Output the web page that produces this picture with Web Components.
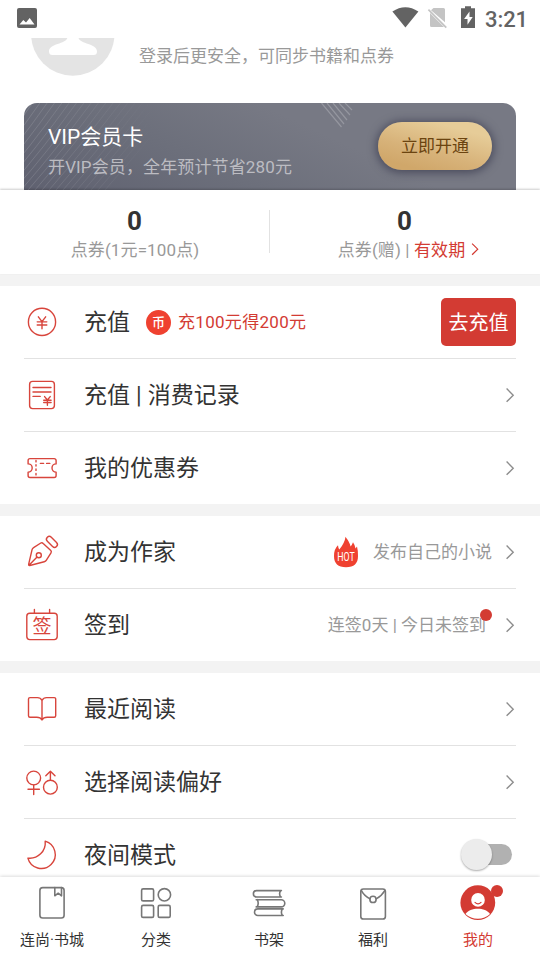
<!DOCTYPE html>
<html lang="zh-CN">
<head>
<meta charset="utf-8">
<title>我的</title>
<style>
html,body{margin:0;height:100%;overflow:hidden;background:#fff}
body{font-family:Roboto,"Noto Sans CJK SC",sans-serif;color:#333}
</style>
</head>
<body>
<my-page></my-page>
<script>
const define = (name, html, setup) => customElements.define(name, class extends HTMLElement {
  constructor() {
    super();
    this.attachShadow({mode: 'open'});
  }
  connectedCallback() {
    this.shadowRoot.innerHTML = html;
    if (setup) setup(this, this.shadowRoot);
  }
});

const yen = (x, y, w, h) => `<path d="M${x + w * .12} ${y}l${w * .38} ${h * .4}l${w * .38} ${-h * .4}M${x} ${y + h * .42}h${w}M${x} ${y + h * .68}h${w}M${x + w / 2} ${y + h * .4}v${h * .6}"/>`;

/* Menu glyphs on a 36x36 grid, tab glyphs on a 40x36 grid. */
const glyphs = {
  yuan: `<circle cx="18" cy="17.9" r="13.6"/>` + yen(13.2, 12.8, 9.6, 12),
  record: `<rect x="5.6" y="4.4" width="24.8" height="27.2" rx="3"/><path d="M9 10.5h18M9 15h18M9 19.4h7.2"/>` + yen(19.7, 19.6, 7.4, 8.6),
  ticket: `<path d="M6 8.6h24.2a1.9 1.9 0 0 1 1.9 1.9v3.4a4.1 4.1 0 0 0 0 8.2v3.5a1.9 1.9 0 0 1-1.9 1.9H6a1.9 1.9 0 0 1-1.9-1.9v-3.5a4.1 4.1 0 0 0 0-8.2v-3.4A1.9 1.9 0 0 1 6 8.6z"/><path d="M12 10.5v1.400M12 14.700v1.400M12 19v1.400M12 23.500v1.400M16.400 13.400h3.200M22.600 13.400h3.200"/>`,
  pen: `<path d="M16.8 9Q18 8.2 19.2 9.4L26.8 16.6Q27.8 17.6 27 18.8L22.4 26.2Q21.7 27.4 20.2 27.8L5.8 31.5Q4.4 31.7 4.7 30.2L8 15.8Q8.3 14.4 9.6 13.6zM5 31.2l7.8-8"/><circle cx="14.8" cy="21.2" r="2.5"/><rect x="22" y="5.4" width="13" height="5.6" rx="2.8" transform="rotate(45 28.5 8.2) translate(-.6 .2)"/>`,
  sign: `<rect x="2.8" y="6.3" width="30.4" height="26.3" rx="3"/><path d="M10.4 2.4v4M25.6 2.4v4"/><text x="18" y="26.300" font-size="19" text-anchor="middle">签</text>`,
  book: `<path d="M18 9.3Q16.5 6.6 13.4 6.6H6Q4.5 6.6 4.5 8.1V24.8Q4.5 26.3 6 26.3H12.8Q16.5 26.3 18 28.9Q19.5 26.3 23.2 26.3H30.2Q31.7 26.3 31.7 24.8V8.1Q31.7 6.6 30.2 6.6H22.6Q19.5 6.6 18 9.3V29"/>`,
  gender: `<circle cx="9.7" cy="14" r="6.9"/><path d="M9.7 21v9.6M4 25.2h11.4"/><circle cx="26.4" cy="23.2" r="6.9"/><path d="M26.4 16.2V7.2M21.8 11.8l4.6-4.6 4.6 4.6"/>`,
  moon: `<path d="M21.2 4.2A13.9 13.9 0 1 1 3.9 21.1A15.5 15.5 0 0 0 21.2 4.2z"/>`,
  store: `<rect x="7.9" y="2.6" width="24.2" height="30.4" rx="2.8"/><path d="M22.8 2.6v8.2l3.4-2.6 3.3 2.6V2.6"/>`,
  grid: `<rect x="5.6" y="3.9" width="12" height="12" rx="1.5"/><circle cx="28.4" cy="9.8" r="6.2"/><rect x="5.6" y="20.4" width="12" height="12" rx="1.5"/><rect x="22.2" y="20.4" width="12" height="12" rx="1.5"/>`,
  shelf: `<path d="M32.4 5.600H7.600a3.200 3.200 0 0 0 0 6.400H32.400M31.600 5.600q-2 3.200 0 6.400M7.200 14.700H32.200a3.600 3.600 0 0 1 0 7.200H7.200M8.200 14.700q2 3.600 0 7.200M34.200 23.900H8.800a3.300 3.300 0 0 0 0 6.600H34.200M33.400 23.900q-2 3.300 0 6.600"/>`,
  welfare: `<rect x="7.8" y="4" width="24.6" height="30" rx="2.6"/><path d="M8.4 5.6Q11 10.5 17 13.9M31.8 5.6Q29 10.5 23.2 13.9"/><circle cx="20" cy="14.4" r="3.1"/>`,
  me: `<circle cx="19.8" cy="17.7" r="17.4" fill="currentColor" stroke="none"/><circle cx="20" cy="14.9" r="6.8" fill="#fff" stroke="none"/><path d="M7.5 29C12 22 27.5 22 32 29Q27 33.8 19.8 33.8T7.5 29z" fill="#fff" stroke="none"/><path d="M17 17.4q3 2.8 6 0" stroke-width="1.2"/>`
};

define('ui-glyph', `<style>:host{display:block;flex:none}svg{display:block;fill:none;stroke:currentColor;stroke-width:1.4;stroke-linecap:round;stroke-linejoin:round}:host([wide]) svg{stroke-width:1.6}text{fill:currentColor;stroke:none;font-family:"Noto Sans CJK SC",sans-serif}</style><slot></slot>`, (el, root) => {
  const w = el.hasAttribute('wide') ? 40 : 36;
  root.innerHTML += `<svg width="${w}" height="36" viewBox="0 0 ${w} 36">${glyphs[el.getAttribute('name')]}</svg>`;
});

define('ui-chevron', `<style>:host{display:block;flex:none}svg{display:block;fill:none;stroke:currentColor;stroke-width:1.4}</style><svg width="10" height="16" viewBox="0 0 10 16"><path d="M1.600 1.600 8.200 8.200 1.600 14.800"/></svg>`);

define('status-bar', `<style>
:host{display:flex;align-items:center;height:38px;box-sizing:border-box;padding:0 12px 2px 17px;color:#636363;background:#fff;position:relative;z-index:2}
svg{display:block;fill:currentColor}.sp{flex:1}time{font-size:22px;font-weight:500;line-height:26px;margin:3px 0 0 9px;letter-spacing:-.1px}
</style>
<svg width="20" height="20" viewBox="0 0 20 20"><path fill-rule="evenodd" d="M2 0H18Q20 0 20 2V18Q20 20 18 20H2Q0 20 0 18V2Q0 0 2 0zM2.5 16.6H17.5L12.7 10 9 14.6 6.3 12z"/></svg>
<span class="sp"></span>
<svg width="84" height="24" viewBox="392 6 84 24"><path d="M392.4 11.6Q405.3 2.8 418.4 11.6L405.4 27.4z"/>
<path fill="#c4c4c4" d="M433.5 8H443.5Q445 8 445 9.5V22.3L431 10.2zM430 13 444 27H431.5Q430 27 430 25.5z"/><path d="M428.4 9.6 446.3 27.6" stroke="#c4c4c4" stroke-width="1.7"/>
<path fill-rule="evenodd" d="M465 6.2h6v2h4V28h-14V8.2h4zM469.5 11.5l-5.4 7.6h3.4v5.7l5.2-7.9h-3.2z"/></svg>
<time>3:21</time>`);

define('profile-head', `<style>
:host{display:flex;height:65px;padding-left:31px}svg{display:block}p{margin:5px 0 0 24px;font-size:17px;line-height:26px;color:#999}
</style>
<svg width="84" height="40" viewBox="31 38 84 40"><circle cx="72.8" cy="34" r="41.7" fill="#e4e4e4"/><path fill="#fff" d="M67.3 38H78.5C80 44 97 43.500 97 51.500Q97 55 93.500 55H52.500Q49 55 49 51.500C49 43.500 66 44 67.300 38z"/></svg>
<p>登录后更安全，可同步书籍和点券</p>`);

define('vip-card', `<style>
:host{display:flex;justify-content:space-between;height:87px;margin:0 24px;padding:0 24px;box-sizing:border-box;border-radius:13px 13px 0 0;position:relative;overflow:hidden;background:linear-gradient(25deg,#5f6170 0%,#6c6f7b 35%,#777984 62%,#777984 100%)}
svg{position:absolute;left:0;top:0;fill:none;stroke:#fff}
.t{position:relative}h2{margin:19px 0 0;font-size:21px;line-height:30px;font-weight:400;color:#fff}p{margin:1px 0 0;font-size:17px;line-height:28px;letter-spacing:.13px;color:#bcbcc2}
button{position:relative;margin:19px 0 0;width:114px;height:48px;border:0;border-radius:24px;padding:0;font:17px/48px Roboto,"Noto Sans CJK SC",sans-serif;color:#6b4410;background:linear-gradient(15deg,#d0a76a 15%,#d7b279 40%,#e6cc98 80%);box-shadow:0 1px 9px 2px #4b4c5d}
</style>
<svg width="492" height="87"><defs><linearGradient id="f" gradientUnits="userSpaceOnUse" x1="0" y1="0" x2="130" y2="0"><stop stop-color="#fff" stop-opacity=".13"/><stop offset="1" stop-color="#fff" stop-opacity="0"/></linearGradient></defs><g class="a" stroke="url(#f)"></g><path stroke-opacity=".22" stroke-width="1.2" d="M297.500 0 317.500 24M303 0 320 21M309 0 323 17M315 0 326 12M321 0 328 7"/></svg>
<div class="t"><h2>VIP会员卡</h2><p>开VIP会员，全年预计节省280元</p></div><button>立即开通</button>`, (el, root) => {
  let d = '';
  for (let i = 0; i < 22; i++) {
    const k = i * 7;
    d += `M${-66 + k} 87Q${-30 + k} 46 ${4 + k * 1.05} -4`;
  }
  root.querySelector('.a').innerHTML = `<path d="${d}"/>`;
});

define('points-panel', `<style>
:host{display:flex;height:84px;background:#fff;position:relative;box-shadow:0 -1px 2px #0003}
div{flex:1;text-align:center}div b{display:block;margin:15px 0 0 -1px;font-size:26px;line-height:32px;font-weight:700}
p{margin:0;display:flex;justify-content:center;align-items:center;font-size:17px;line-height:26px;letter-spacing:.12px;color:#999;white-space:pre}
i{width:1px;height:43px;margin:20px 0 0 -1px;background:#e2e2e2}em{font-style:normal}.g{padding-left:8px}.r{color:#d33b33}ui-chevron{transform:scale(.85);margin:-2px 0 0 5px}
</style>
<div><b>0</b><p>点券(1元=100点)</p></div><i></i><div><b>0</b><p class="g">点券(赠) | <em class="r">有效期</em><ui-chevron class="r"></ui-chevron></p></div>`);

define('menu-group', `<style>:host{display:block;background:#fff;border-top:12px solid #f3f3f3}</style><slot></slot>`);

define('menu-row', `<style>
:host{display:flex;align-items:center;height:72px;margin:0 24px}
:host(:not(:first-child)){border-top:1px solid #e2e2e2}
ui-glyph{color:#d8453c}h3{margin:1px 16px 0 24px;font-size:23px;line-height:34px;font-weight:400;white-space:pre;word-spacing:.4px;color:#333}
.end{margin:-1px 0 0 auto;display:flex;align-items:center;font-size:17px;line-height:26px;color:#999}
ui-chevron{margin:1px 1px 0 13px;color:#8d8d8d}:host([plain]) ui-chevron{display:none}
</style>
<ui-glyph></ui-glyph><h3></h3><slot name="note"></slot><div class="end"><slot></slot><ui-chevron></ui-chevron></div>`, (el, root) => {
  const g = document.createElement('ui-glyph');
  g.setAttribute('name', el.getAttribute('icon'));
  root.querySelector('ui-glyph').replaceWith(g);
  root.querySelector('h3').textContent = el.getAttribute('label');
});

define('coin-note', `<style>:host{display:flex;align-items:center;font-size:17px;line-height:26px;letter-spacing:.3px;color:#d33b33}i{width:25px;height:25px;margin-right:7px;border-radius:50%;background:#ef4130;color:#fff;font:500 13px/24px "Noto Sans CJK SC",sans-serif;text-align:center;letter-spacing:0}</style><i>币</i><slot></slot>`);

define('solid-button', `<style>:host{display:block;width:75px;height:48px;margin-top:1px;border-radius:5px;background:#d33b33;color:#fff;font-size:20px;line-height:50px;text-align:center}</style><slot></slot>`);

define('hot-badge', `<style>:host{display:block;margin-right:15px}svg{display:block;overflow:visible;fill:#ef4130}text{fill:#fff;font:12px Roboto,sans-serif}</style>
<svg width="24" height="32" viewBox="0 0 24 32"><path d="M11.500.8C13 3 16 7 16.500 10.500Q18 9 19 6.200Q21 9 21.500 12.500L23 10.500Q24.200 15 24 20C24 27.500 20 31.200 12 31.200S0 27.500 0 20Q0 13 4 9.300Q4.200 12 5.300 13.500C9 9 11 5 11.500.8z"/><text x="12" y="25.300" text-anchor="middle" textLength="17.500" lengthAdjust="spacingAndGlyphs">HOT</text></svg>`);

define('dot-note', `<style>:host{display:block;position:relative;padding-right:6px;line-height:26px}i{position:absolute;right:0;top:-3px;width:12px;height:12px;border-radius:50%;background:#d33b33}</style><slot></slot><i></i>`);

define('toggle-switch', `<style>:host{display:block;width:47px;height:21px;margin-right:4px;border-radius:11px;background:#b1b1b1;position:relative}i{position:absolute;left:-4px;top:-5px;width:31px;height:31px;border-radius:50%;background:#ececec;box-shadow:0 1px 2px #0005}</style><i></i>`);

define('tab-item', `<style>
:host{display:flex;flex-direction:column;align-items:center;color:#777}
:host([active]){color:#d33b33}span{margin-top:7px;font-size:15px;line-height:24px;color:#333}:host([active]) span{color:inherit}
.w{position:relative}.w i{display:none}:host([active]) .w i{display:block;position:absolute;left:33px;top:0;width:12px;height:12px;border-radius:50%;background:#d33b33}
</style><div class="w"><i></i></div><span><slot></slot></span>`, (el, root) => {
  const g = document.createElement('ui-glyph');
  g.setAttribute('name', el.getAttribute('icon'));
  g.setAttribute('wide', '');
  root.querySelector('.w').prepend(g);
});

define('tab-bar', `<style>:host{display:grid;grid-template-columns:104px 104px 122px 86px 124px;height:83px;box-sizing:border-box;padding-top:8px;background:#fff;position:relative;box-shadow:0 -1px 3px #0002}</style><slot></slot>`);

define('my-page', `<style>:host{display:flex;flex-direction:column;width:540px;height:960px;overflow:hidden;background:#fff}main{flex:1;min-height:0;overflow:hidden}</style>
<status-bar></status-bar>
<main><profile-head></profile-head><vip-card></vip-card><points-panel></points-panel>
<menu-group>
<menu-row icon="yuan" label="充值" plain><coin-note slot="note">充100元得200元</coin-note><solid-button>去充值</solid-button></menu-row>
<menu-row icon="record" label="充值 | 消费记录"></menu-row>
<menu-row icon="ticket" label="我的优惠券"></menu-row></menu-group>
<menu-group>
<menu-row icon="pen" label="成为作家"><hot-badge></hot-badge>发布自己的小说</menu-row>
<menu-row icon="sign" label="签到"><dot-note>连签0天 | 今日未签到</dot-note></menu-row></menu-group>
<menu-group>
<menu-row icon="book" label="最近阅读"></menu-row>
<menu-row icon="gender" label="选择阅读偏好"></menu-row>
<menu-row icon="moon" label="夜间模式" plain><toggle-switch></toggle-switch></menu-row></menu-group>
</main>
<tab-bar><tab-item icon="store">连尚·书城</tab-item><tab-item icon="grid">分类</tab-item><tab-item icon="shelf">书架</tab-item><tab-item icon="welfare">福利</tab-item><tab-item icon="me" active>我的</tab-item></tab-bar>`);
</script>
</body>
</html>
